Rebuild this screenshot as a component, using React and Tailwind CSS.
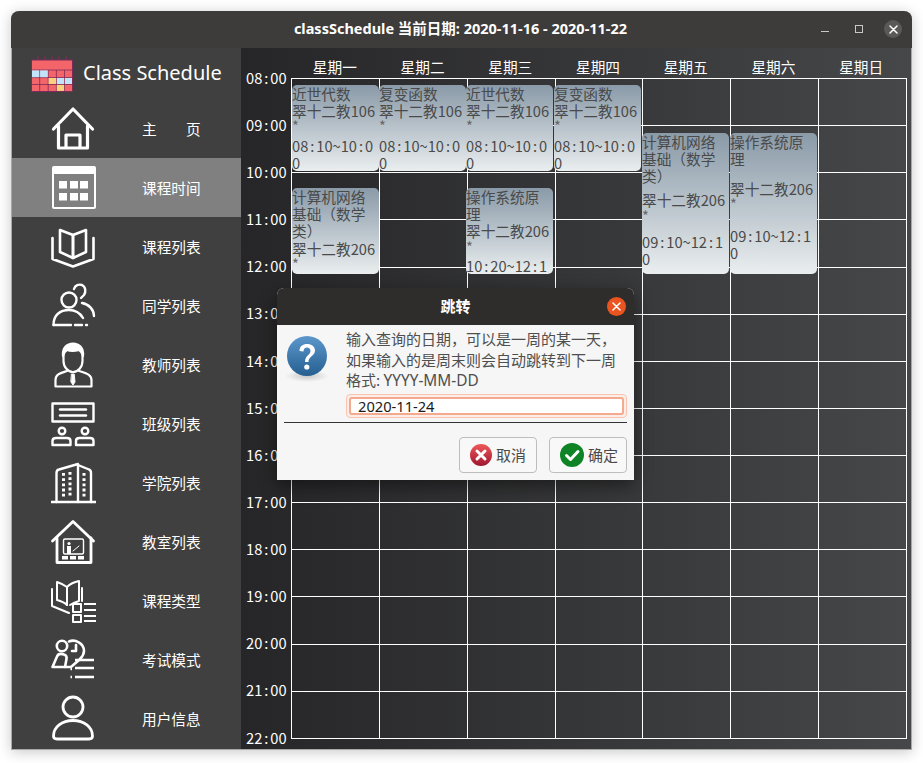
const CJK = "font-['Noto_Sans_CJK_SC','Noto_Sans',sans-serif]";

function Time({ t }) {
  const parts = t.split(":");
  return (
    <>
      {parts.map((p, i) => (
        <span key={i}>
          {i > 0 && <span className="inline-block w-[8px] text-center">:</span>}
          {p}
        </span>
      ))}
    </>
  );
}

const S = ({ children, w = 3 }) => (
  <svg width="48" height="48" viewBox="0 0 48 48" fill="none" stroke="white" strokeWidth={w} strokeLinejoin="round" strokeLinecap="round" className="shrink-0">
    {children}
  </svg>
);

const icons = {
  home: (
    <S w={3.2}>
      <path d="M4.5 24 L24 4 L43.5 24" />
      <path d="M9.5 21 V43 H38.5 V21" />
      <path d="M17 42 V30 H31 V42" />
    </S>
  ),
  calendar: (
    <svg width="48" height="48" viewBox="0 0 48 48" className="shrink-0">
      <rect x="3" y="2" width="44" height="43" rx="2" fill="white" />
      <rect x="5" y="10" width="40" height="33" fill="#808080" />
      {[10, 21, 31].map((x) => [17, 29].map((y) => <rect key={x + "-" + y} x={x} y={y} width="8" height="7.5" fill="white" />))}
    </svg>
  ),
  book: (
    <S w={2.6}>
      <path d="M24 12 L11 7 V29 L24 35 Z" />
      <path d="M24 12 L37 7 V29 L24 35 Z" />
      <path d="M3.5 15 V36 L24 43.5 L44.5 36 V15" />
    </S>
  ),
  students: (
    <S w={2.4}>
      <circle cx="20" cy="18" r="7.5" />
      <path d="M25 7 C26 3 30 2 33 3 C37 5 37 10 35 13 C34 14 33 15 32 16" />
      <path d="M33 21 C40 22 45 28 45 34" />
      <path d="M4.5 43 C4.5 33 11 28 20 28 C26 28 31 31 34 36" />
      <path d="M4.5 43 H22" />
      <path d="M26 43 H33" />
      <path d="M37 43 H38" />
    </S>
  ),
  teacher: (
    <S w={2.2}>
      <path d="M14.5 14 V20 C14.5 26 19 31 24 31 C29 31 33.5 26 33.5 20 V14" />
      <path d="M14 15 C13 7 18 2.5 24 2.5 C30 2.5 35 7 34 15 C33 12 32 10 30 9 C26 10 21 10 18 9 C16 10 15 12 14 15 Z" fill="white" />
      <path d="M18 30 C12 32 6.5 33 6.5 39 V45.5 H42.5 V39 C42.5 33 36 32 30 30" />
      <path d="M22.8 33 H25.2 L26 41 L24 44 L22 41 Z" fill="white" strokeWidth="1" />
    </S>
  ),
  cls: (
    <S w={2.4}>
      <rect x="3.5" y="3.5" width="41" height="18" />
      <path d="M11 9.5 H37" />
      <path d="M11 15.5 H37" />
      <circle cx="13" cy="31" r="3.3" />
      <circle cx="36" cy="31" r="3.3" />
      <path d="M3.5 45 V41 C3.5 39 5 38 7 38 H18 C20 38 21.5 39 21.5 41 V45 Z" />
      <path d="M27 45 V41 C27 39 28.5 38 30.5 38 H41 C43 38 44.5 39 44.5 41 V45 Z" />
    </S>
  ),
  college: (
    <S w={2.4}>
      <path d="M2 43 H47" strokeLinecap="butt" />
      <path d="M7.5 43 V14 C7.5 12 8 11 10 10.5 L29 5 V43" />
      <path d="M29 6 L40 10.5 C41.5 11 42 12 42 14 V43" />
      <path d="M14.5 14 V38 M21 13 V38 M35 14 V38" strokeWidth="3" strokeDasharray="2.8 2.4" strokeLinecap="butt" />
    </S>
  ),
  room: (
    <S w={2.8}>
      <path d="M3.5 23 L24 3.5 L44.5 23" />
      <path d="M8 20 V44.5 H42 V20" />
      <rect x="14.5" y="21" width="20" height="15" rx="1.5" strokeWidth="1.4" />
      <circle cx="20" cy="25.5" r="1.6" fill="white" stroke="none" />
      <rect x="18" y="28" width="4" height="8" fill="white" stroke="none" />
      <path d="M24 33 L30 28" strokeWidth="1" />
      <rect x="13" y="38" width="6" height="3.5" fill="white" stroke="none" />
      <rect x="21" y="38" width="6" height="3.5" fill="white" stroke="none" />
      <rect x="29" y="38" width="6" height="3.5" fill="white" stroke="none" />
    </S>
  ),
  type: (
    <S w={2}>
      <path d="M18 10 C14 7 11 6 8 5 V23 C12 24 15 25 18 28" />
      <path d="M18 10 C21 7 25 5 30 4 V24 C27 25 24 26 21 28" />
      <path d="M18 10 V28" />
      <path d="M3 12 V29 L20 36" />
      <path d="M33 11 V24" />
      <rect x="24" y="27" width="8" height="8" />
      <rect x="24" y="38" width="8" height="7" />
      <path d="M35 27 H47 M35 33 H47 M35 39 H47 M35 44 H47" strokeLinecap="butt" />
    </S>
  ),
  exam: (
    <S w={2.6}>
      <circle cx="13" cy="10" r="5.2" />
      <path d="M20 5.5 C26 3 35 7 35 15 C35 19 33 21 31 23" />
      <path d="M27 9 V15 H23" />
      <path d="M3.5 31 L8 20.5 C9 18 12 17.5 15 18.5 C17 19 18 21 17.5 23 L16 31 Z" />
      <path d="M16 31 H22 L30 24" />
      <path d="M26 24 H45 M26 32 H45 M26 41 H45" strokeLinecap="butt" strokeWidth="2.4" />
      <path d="M21.5 33 H23 M21.5 41 H23" strokeLinecap="butt" strokeWidth="2.4" />
    </S>
  ),
  user: (
    <S w={2.8}>
      <circle cx="24" cy="12" r="10" />
      <path d="M4.5 41 C4.5 32 13 25.5 24 25.5 C35 25.5 43.5 32 43.5 41 C43.5 43 42 44 40 44 H8 C6 44 4.5 43 4.5 41 Z" />
    </S>
  ),
};

const menu = [
  ["home", "主　　页"],
  ["calendar", "课程时间", true],
  ["book", "课程列表"],
  ["students", "同学列表"],
  ["teacher", "教师列表"],
  ["cls", "班级列表"],
  ["college", "学院列表"],
  ["room", "教室列表"],
  ["type", "课程类型"],
  ["exam", "考试模式"],
  ["user", "用户信息"],
];

const Logo = () => (
  <svg width="42" height="36" viewBox="0 0 42 36" className="shrink-0">
    <rect x="0.5" y="4" width="41" height="31.5" rx="1" fill="#f4656a" stroke="#7c2b58" />
    {[7, 14, 21, 28, 35].map((x) => (
      <path key={x} d={`M${x} 0.5 v3.5`} stroke="#7c2b58" strokeWidth="1.5" fill="none" />
    ))}
    <path d="M1 14 H41 M1 21.6 H41 M1 28.5 H41 M8.7 14 V35 M17.2 14 V35 M25.4 14 V35 M33.5 14 V35" stroke="#7c2b58" strokeWidth="0.8" />
    <rect x="1" y="14.4" width="7.3" height="6.8" fill="#c0e4fa" />
    <rect x="9.1" y="14.4" width="7.7" height="6.8" fill="#c0e4fa" />
    <rect x="25.8" y="22" width="7.3" height="6" fill="#c0e4fa" />
    <rect x="33.9" y="22" width="7.1" height="6" fill="#c0e4fa" />
    <rect x="17.6" y="22" width="7.4" height="6" fill="#f9d27f" />
    <rect x="25.8" y="28.9" width="7.3" height="6" fill="#f9d27f" />
  </svg>
);

const days = ["星期一", "星期二", "星期三", "星期四", "星期五", "星期六", "星期日"];
const hours = ["08:00", "09:00", "10:00", "11:00", "12:00", "13:00", "14:00", "15:00", "16:00", "17:00", "18:00", "19:00", "20:00", "21:00", "22:00"];
const cells = Array.from({ length: 98 }, (_, i) => i);

const cards = [
  { pos: "left-[0px] top-[6px] h-[86px]", g: [["近世代数"], ["翠十二教106", "*"], ["08:10~10:0", "0"]] },
  { pos: "left-[87px] top-[6px] h-[86px]", g: [["复变函数"], ["翠十二教106", "*"], ["08:10~10:0", "0"]] },
  { pos: "left-[174px] top-[6px] h-[86px]", g: [["近世代数"], ["翠十二教106", "*"], ["08:10~10:0", "0"]] },
  { pos: "left-[262px] top-[6px] h-[86px]", g: [["复变函数"], ["翠十二教106", "*"], ["08:10~10:0", "0"]] },
  { pos: "left-[0px] top-[109px] h-[86px]", g: [["计算机网络", "基础（数学", "类）"], ["翠十二教206", "*"]] },
  { pos: "left-[174px] top-[109px] h-[86px]", g: [["操作系统原", "理"], ["翠十二教206", "*"], ["10:20~12:1"]] },
  { pos: "left-[350px] top-[54px] h-[141px]", g: [["计算机网络", "基础（数学", "类）"], ["翠十二教206", "*"], ["09:10~12:1", "0"]] },
  { pos: "left-[438px] top-[54px] h-[141px]", g: [["操作系统原", "理"], ["翠十二教206", "*"], ["09:10~12:1", "0"]] },
];

function Card({ pos, g }) {
  return (
    <div className={`absolute w-[86.5px] ${pos} flex flex-col justify-between overflow-hidden rounded-[5px] bg-gradient-to-b from-[#8a9aa8] to-[#eaeeef] text-[14.67px] leading-[17.2px] text-[#4a4a4a]`}>
      {g.map((lines, i) => (
        <div key={i}>
          {lines.map((l, j) => (
            <div key={j} className="whitespace-nowrap">
              {l === "*" ? <span className="block -translate-y-[2px] text-[#666666]">*</span> : <Time t={l} />}
            </div>
          ))}
        </div>
      ))}
      <div />
    </div>
  );
}

function Dialog() {
  return (
    <div className={`absolute left-[265px] top-[277px] w-[357px] h-[192px] flex flex-col overflow-hidden rounded-t-[7px] bg-[#f6f6f6] shadow-[0_6px_18px_rgba(0,0,0,0.45)] ${CJK}`}>
      <div className="h-[37px] shrink-0 flex items-center justify-center relative bg-[#2f2d2c] text-white font-bold text-[15px]">
        跳转
        <div className="absolute right-[8px] top-[9px] w-[19px] h-[19px] rounded-full bg-[#e95420] flex items-center justify-center">
          <svg width="9" height="9" viewBox="0 0 9 9" stroke="white" strokeWidth="1.5" strokeLinecap="round">
            <path d="M1 1 L8 8 M8 1 L1 8" />
          </svg>
        </div>
      </div>
      <div className="flex-1 flex flex-col px-[7px]">
        <div className="flex h-[97px]">
          <div className="w-[62px] shrink-0 pt-[11px]">
            <svg width="46" height="50" viewBox="0 0 46 50">
              <defs>
                <linearGradient id="q" x1="0" y1="0" x2="0" y2="1">
                  <stop offset="0" stopColor="#5c97cc" />
                  <stop offset="1" stopColor="#265f90" />
                </linearGradient>
                <radialGradient id="qs">
                  <stop offset="0" stopColor="#c8c8c8" />
                  <stop offset="1" stopColor="#f6f6f6" />
                </radialGradient>
              </defs>
              <ellipse cx="23" cy="40" rx="22" ry="6" fill="url(#qs)" />
              <circle cx="23" cy="20" r="20" fill="url(#q)" />
              <path d="M15.5 15 C15.5 10 19 8 23 8 C27.5 8 31 10.5 31 14.5 C31 20 24.5 20 24.5 26 H21 C21 19 26.5 19 26.5 15 C26.5 13 25 11.5 23 11.5 C21 11.5 19.5 13 19.5 15.5 Z" fill="white" />
              <circle cx="22.8" cy="31" r="2.6" fill="white" />
            </svg>
          </div>
          <div className="flex flex-col pl-0 w-[282px]">
            <div className="pt-[4px] text-[15px] leading-[20.5px] text-[#4f4f4f] whitespace-nowrap">
              <div>输入查询的日期，可以是一周的某一天，</div>
              <div>如果输入的是周末则会自动跳转到下一周</div>
              <div>格式: <span className="font-['Noto_Sans',sans-serif] text-[15.4px]">YYYY-MM-DD</span></div>
            </div>
            <div className="mt-[2.5px] h-[24px] rounded-[4px] border border-[#f9c3b0] p-[2px] bg-[#fbeee9]">
              <div className="h-full rounded-[3px] border-2 border-[#f5a98f] bg-white flex items-center pl-[7px] text-[14.67px] leading-none text-[#1a1a1a] font-['Noto_Sans',sans-serif]">
                2020-11-24
              </div>
            </div>
          </div>
        </div>
        <div className="h-px bg-[#333] shrink-0" />
        <div className="flex justify-end gap-[12px] pt-[14px]">
          <button className="w-[78px] h-[36px] rounded-[4px] border border-[#bdbdbd] bg-[#f8f8f8] flex items-center pl-[10px] gap-[4px] text-[15px] text-[#4a4a4a]">
            <svg width="22" height="22" viewBox="0 0 22 22" className="shrink-0">
              <defs>
                <linearGradient id="r" x1="0" y1="0" x2="0" y2="1">
                  <stop offset="0" stopColor="#ee5a5a" />
                  <stop offset="1" stopColor="#a01530" />
                </linearGradient>
              </defs>
              <circle cx="11" cy="11" r="11" fill="url(#r)" />
              <path d="M7 7 L15 15 M15 7 L7 15" stroke="white" strokeWidth="3" strokeLinecap="round" />
            </svg>
            取消
          </button>
          <button className="w-[78px] h-[36px] rounded-[4px] border border-[#bdbdbd] bg-[#f8f8f8] flex items-center pl-[10px] gap-[4px] text-[15px] text-[#4a4a4a]">
            <svg width="24" height="24" viewBox="0 0 24 24" className="shrink-0">
              <circle cx="12" cy="12" r="12" fill="#0f8427" />
              <path d="M6.5 12.5 L10.5 16.5 L18 8.5" stroke="white" strokeWidth="3" fill="none" strokeLinecap="round" strokeLinejoin="round" />
            </svg>
            确定
          </button>
        </div>
      </div>
    </div>
  );
}

export default function App() {
  return (
    <div className={`w-[923px] h-[763px] bg-white pl-[11px] pt-[11px] overflow-hidden ${CJK}`}>
      <div className="relative w-[901px] h-[739px] flex flex-col rounded-t-[8px] overflow-visible border-x border-b border-[#a8a8a8] shadow-[0_2px_14px_rgba(0,0,0,0.22)]">
        <div className="h-[37px] shrink-0 -mx-px relative flex items-center justify-center rounded-t-[8px] bg-[#3e3c3a] text-white font-bold text-[14.5px] pb-[1px] pr-[2px] font-['Noto_Sans','Noto_Sans_CJK_SC',sans-serif]">
          classSchedule 当前日期: 2020-11-16 - 2020-11-22
          <div className="absolute right-[10px] top-[9px] flex items-center gap-[17px] font-normal">
            <div className="w-[8px] h-[1px] bg-[#c8c8c8] mt-[4px] mr-[9px]" />
            <div className="w-[8px] h-[8px] border border-[#c8c8c8] mr-[4px]" />
            <div className="w-[18px] h-[18px] rounded-full bg-[#5a5957] flex items-center justify-center">
              <svg width="9" height="9" viewBox="0 0 9 9" stroke="white" strokeWidth="1.5" strokeLinecap="round">
                <path d="M1 1 L8 8 M8 1 L1 8" />
              </svg>
            </div>
          </div>
        </div>
        <div className="flex flex-1 min-h-0">
          <aside className="w-[229px] shrink-0 bg-[#404040] text-white">
            <div className="h-[51px] flex items-center pl-[19px] gap-[10px]">
              <Logo />
              <span className="text-[20px] font-['Noto_Sans',sans-serif] pb-[1px]">Class Schedule</span>
            </div>
            {menu.map(([ic, label, active]) => (
              <div key={ic} className={`h-[59px] flex items-center pl-[37px] ${active ? "bg-[#808080]" : ""}`}>
                {icons[ic]}
                <span className="ml-[45px] text-[14.67px] whitespace-pre">{label}</span>
              </div>
            ))}
          </aside>
          <main className="flex-1 flex bg-gradient-to-r from-[#262628] to-[#464748] text-white text-[14.67px]">
            <div className="w-[50px] shrink-0 pt-[6.2px] pl-[5px]">
              {hours.map((h) => (
                <div key={h} className="h-[47.14px] flex items-center whitespace-nowrap">
                  <Time t={h} />
                </div>
              ))}
            </div>
            <div className="w-[616px]">
              <div className="h-[30px] grid grid-cols-7 items-end pr-[2px]">
                {days.map((d) => (
                  <div key={d} className="text-center leading-[20px] pb-[1px]">{d}</div>
                ))}
              </div>
              <div className="relative w-[616px] h-[661px] border-l border-t border-white">
                <div className="grid grid-cols-[repeat(7,87.857px)] grid-rows-[repeat(14,47.14px)]">
                  {cells.map((c) => (
                    <div key={c} className="border-r border-b border-white" />
                  ))}
                </div>
                {cards.map((c, i) => (
                  <Card key={i} pos={c.pos} g={c.g} />
                ))}
              </div>
            </div>
          </main>
        </div>
        <Dialog />
      </div>
    </div>
  );
}
